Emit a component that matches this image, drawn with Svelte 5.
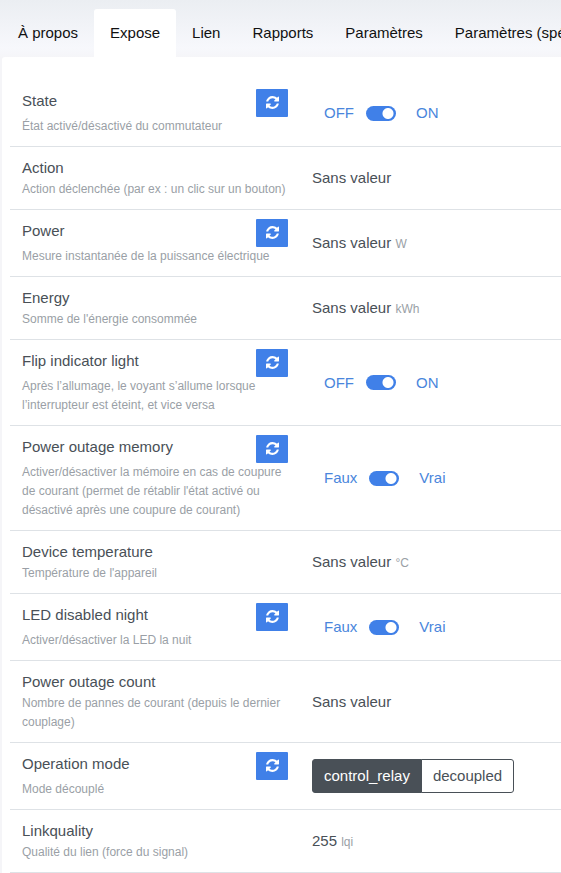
<script>
  const tabs = ['À propos', 'Expose', 'Lien', 'Rapports', 'Paramètres', 'Paramètres (spécifiques)'];
  let active = $state('Expose');

  let features = $state([
    { name: 'State', text: 'État activé/désactivé du commutateur', refresh: true, off: 'OFF', on: 'ON', checked: true },
    { name: 'Action', text: 'Action déclenchée (par ex : un clic sur un bouton)', value: 'Sans valeur' },
    { name: 'Power', text: 'Mesure instantanée de la puissance électrique', refresh: true, value: 'Sans valeur', unit: 'W' },
    { name: 'Energy', text: "Somme de l'énergie consommée", value: 'Sans valeur', unit: 'kWh' },
    { name: 'Flip indicator light', text: 'Après l’allumage, le voyant s’allume lorsque l’interrupteur est éteint, et vice versa', refresh: true, off: 'OFF', on: 'ON', checked: true },
    { name: 'Power outage memory', text: "Activer/désactiver la mémoire en cas de coupure de courant (permet de rétablir l'état activé ou désactivé après une coupure de courant)", refresh: true, off: 'Faux', on: 'Vrai', checked: true },
    { name: 'Device temperature', text: "Température de l'appareil", value: 'Sans valeur', unit: '°C' },
    { name: 'LED disabled night', text: 'Activer/désactiver la LED la nuit', refresh: true, off: 'Faux', on: 'Vrai', checked: true },
    { name: 'Power outage count', text: 'Nombre de pannes de courant (depuis le dernier couplage)', value: 'Sans valeur' },
    { name: 'Operation mode', text: 'Mode découplé', refresh: true, options: ['control_relay', 'decoupled'], selected: 'control_relay' },
    { name: 'Linkquality', text: 'Qualité du lien (force du signal)', value: '255', unit: 'lqi' }
  ]);
</script>

<div class="page">
  <nav class="tabs">
    {#each tabs as tab}
      <a href="#{tab}" class:active={active === tab} onclick={(e) => { e.preventDefault(); active = tab; }}>{tab}</a>
    {/each}
  </nav>

  <main class="panel">
    {#each features as f}
      <section class="row">
        <div class="info">
          <div class="head">
            <strong>{f.name}</strong>
            {#if f.refresh}
              <button class="refresh" aria-label="Actualiser {f.name}">
                <svg viewBox="0 0 1536 1536" width="13" height="13" aria-hidden="true">
                  <path fill="currentColor" d="M1511 928q0 5-1 7-64 268-268 434.500T764 1536q-146 0-282.500-55T238 1324l-129 129q-19 19-45 19t-45-19-19-45V960q0-26 19-45t45-19h448q26 0 45 19t19 45-19 45l-137 137q71 66 161 102t187 36q134 0 250-65t186-179q11-17 53-117 8-23 30-23h192q13 0 22.500 9.500t9.500 22.500zm25-800v448q0 26-19 45t-45 19h-448q-26 0-45-19t-19-45 19-45l138-138Q969 256 768 256q-134 0-250 65T332 500q-11 17-53 117-8 23-30 23H50q-13 0-22.500-9.500T18 608v-7q65-268 270-434.500T768 0q146 0 284 55.500T1297 212l130-129q19-19 45-19t45 19 19 45z" />
                </svg>
              </button>
            {/if}
          </div>
          <small>{f.text}</small>
        </div>

        <div class="control">
          {#if f.off}
            <div class="switch">
              <button class="link" onclick={() => (f.checked = false)}>{f.off}</button>
              <input type="checkbox" role="switch" aria-label={f.name} bind:checked={f.checked} />
              <button class="link" onclick={() => (f.checked = true)}>{f.on}</button>
            </div>
          {:else if f.options}
            <div class="group" role="group" aria-label={f.name}>
              {#each f.options as option}
                <button class:selected={f.selected === option} onclick={() => (f.selected = option)}>{option}</button>
              {/each}
            </div>
          {:else}
            <span>{f.value}{#if f.unit}{' '}<small>{f.unit}</small>{/if}</span>
          {/if}
        </div>
      </section>
    {/each}
  </main>
</div>

<style>
  :global(body) {
    background: #f5f5f8;
  }

  .page {
    padding: 9px 0 0 2px;
    background: linear-gradient(#ebeef2, #f7f8fc 48px, #f5f5f8 58px);
    color: #495057;
    font: 15px/24px "Liberation Sans", Arial, sans-serif;
  }

  button {
    margin: 0;
    border: 0;
    font: inherit;
    cursor: pointer;
  }

  .tabs {
    display: flex;
    overflow-x: auto;
    scrollbar-width: none;
  }

  .tabs a {
    flex: none;
    padding: 12px 16px;
    border-radius: 3px 3px 0 0;
    color: #111;
    text-decoration: none;
  }

  .tabs a.active {
    background: #fff;
  }

  .panel {
    padding: 23px 0 0 8px;
    border-radius: 3px 0 0 0;
    background: #fff;
  }

  .row {
    display: grid;
    grid-template-columns: 290px 1fr;
    border-bottom: 1px solid #dee2e6;
  }

  .info {
    padding: 9px 12px 10px;
  }

  .head {
    display: flex;
    justify-content: space-between;
    align-items: flex-start;
  }

  strong {
    font-weight: 400;
  }

  small {
    color: #9a9fa6;
    font-size: 12px;
  }

  .info small {
    display: block;
    line-height: 19px;
  }

  .refresh {
    display: flex;
    align-items: center;
    justify-content: center;
    width: 32px;
    height: 28px;
    padding: 0 0 2px;
    border-radius: 1px;
    background: #4080e8;
    color: #fff;
  }

  .control {
    display: flex;
    align-items: center;
    padding: 0 12px;
  }

  .switch {
    display: flex;
    align-items: center;
    padding-left: 12px;
  }

  .link {
    padding: 0;
    background: none;
    color: #4a86dc;
  }

  input {
    appearance: none;
    width: 30px;
    height: 15px;
    margin: 0 20px 0 12px;
    border-radius: 8px;
    background: radial-gradient(circle at 8px 50%, #fff 5px, transparent 6px) #adb5bd;
    cursor: pointer;
  }

  input:checked {
    background: radial-gradient(circle at 22px 50%, #fff 5px, transparent 6px) #4080e8;
  }

  .group {
    display: flex;
  }

  .group button {
    padding: 4px 11px;
    border: 1px solid #495057;
    border-radius: 3px;
    background: #fff;
    color: #495057;
  }

  .group button:not(:last-child) {
    border-top-right-radius: 0;
    border-bottom-right-radius: 0;
  }

  .group button:not(:first-child) {
    margin-left: -1px;
    border-top-left-radius: 0;
    border-bottom-left-radius: 0;
  }

  .group button.selected {
    background: #495057;
    color: #fff;
  }
</style>
